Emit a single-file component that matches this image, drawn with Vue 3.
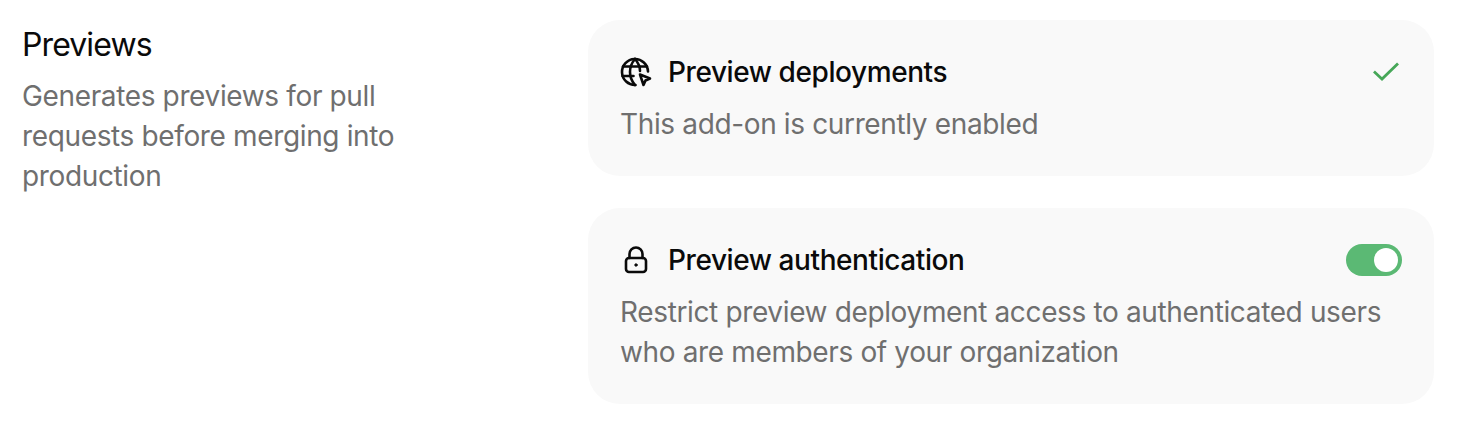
<template>
  <main class="section">
    <div class="intro">
      <h2>Previews</h2>
      <p>Generates previews for pull requests before merging into production</p>
    </div>
    <div class="cards">
      <div class="card">
        <div class="card-head">
          <svg class="icon" viewBox="0 0 32 32" fill="none" stroke="#0a0a0a" stroke-width="2.6" stroke-linecap="round" stroke-linejoin="round">
            <path d="M28 15.500A13 13 0 1 0 15.500 29" />
            <path d="M3 10.500h24M2.500 20h11" />
            <path d="M15 3C11.500 7 10 11.500 10 16S11.500 25 15 29" />
            <path d="M15 3C18.500 7 20 11 20 15" />
            <path d="M20 18.500L30 22.500L25.500 24.500L23.500 29Z" />
          </svg>
          <h3>Preview deployments</h3>
          <svg class="check" viewBox="0 0 28 22" fill="none" stroke="#46a758" stroke-width="2.800" stroke-linecap="square">
            <path d="M3 11.500L10 18L25 3.500" />
          </svg>
        </div>
        <p>This add-on is currently enabled</p>
      </div>
      <div class="card">
        <div class="card-head">
          <svg class="icon" viewBox="0 0 32 32" fill="none" stroke="#0a0a0a" stroke-width="2.600" stroke-linecap="round" stroke-linejoin="round">
            <rect x="6" y="14" width="20" height="14" rx="3" />
            <path d="M9.500 14V10a6.500 6.500 0 0 1 13 0V14" />
            <circle cx="16" cy="21" r="1.200" fill="#0a0a0a" stroke-width="1" />
          </svg>
          <h3>Preview authentication</h3>
          <span class="toggle"><span class="knob"></span></span>
        </div>
        <p>Restrict preview deployment access to authenticated users who are members of your organization</p>
      </div>
    </div>
  </main>
</template>

<script setup>
</script>

<style scoped>
.section {
  display: flex;
  justify-content: space-between;
  padding: 20px 26px 30px 22px;
  font-family: Inter, "Noto Sans", sans-serif;
  box-sizing: border-box;
  width: 1460px;
  height: 434px;
}

.intro {
  width: 400px;
  padding-top: 4px;
}

h2 {
  margin: 0 0 12px;
  font-size: 32px;
  line-height: 42px;
  letter-spacing: -0.9px;
  font-weight: 400;
  color: #0a0a0a;
}

p {
  margin: 0;
  font-size: 28px;
  line-height: 40px;
  letter-spacing: -0.36px;
  color: #6f6f6f;
}

.intro p {
  margin-top: -2px;
}

.cards {
  width: 846px;
  display: flex;
  flex-direction: column;
  gap: 32px;
}

.card {
  background: #f9f9f9;
  border-radius: 32px;
  padding: 32px;
}

.card-head {
  display: flex;
  align-items: center;
  height: 40px;
  margin-bottom: 12px;
}

.icon {
  width: 32px;
  height: 32px;
  margin-right: 16px;
}

h3 {
  margin: 0;
  flex: 1;
  font-size: 28px;
  line-height: 40px;
  letter-spacing: -0.42px;
  font-weight: 500;
  color: #0a0a0a;
}

.check {
  width: 28px;
  height: 22px;
  margin-right: 2px;
}

.toggle {
  width: 56px;
  height: 32px;
  box-sizing: border-box;
  padding: 4px;
  border-radius: 16px;
  background: #5bb974;
  display: flex;
  justify-content: flex-end;
}

.knob {
  width: 24px;
  height: 24px;
  border-radius: 50%;
  background: #fff;
}
</style>
